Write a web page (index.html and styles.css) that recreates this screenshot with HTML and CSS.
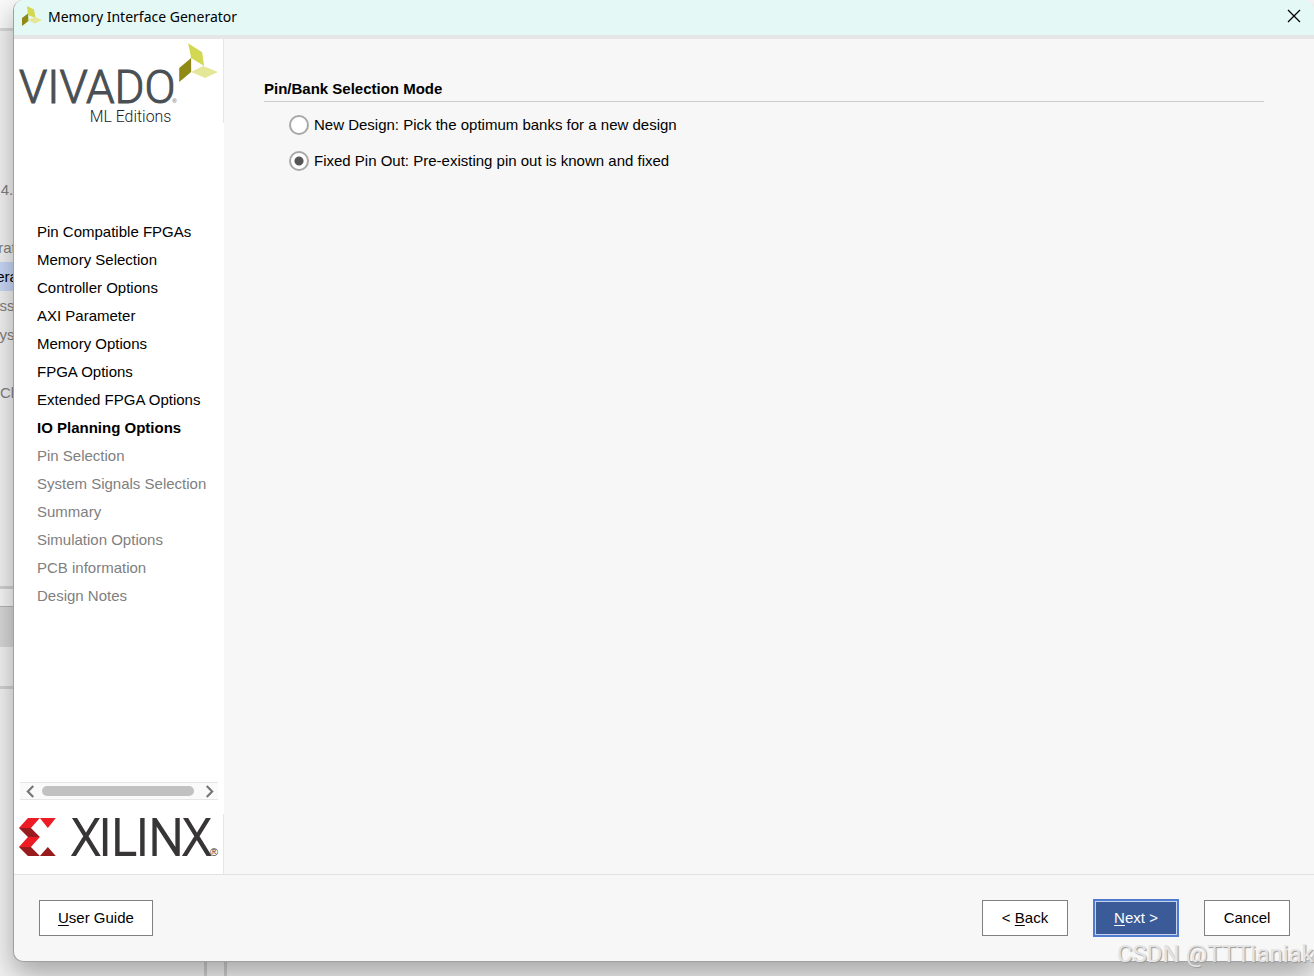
FILE: index.html
```html
<!DOCTYPE html>
<html lang="en">
<head>
  <meta charset="UTF-8" />
  <title>Memory Interface Generator</title>
  <link rel="stylesheet" href="styles.css">
</head>
<body>

  <div class="backdrop">
    <div class="back-top"></div>
    <ul class="back-tree">
      <li>4.</li>
      <li></li>
      <li>rat</li>
      <li class="selected">era</li>
      <li>ss</li>
      <li>ys</li>
      <li></li>
      <li>Cl</li>
    </ul>
    <div class="back-split"></div>
    <div class="back-tab"></div>
    <div class="back-row"></div>
    <div class="back-bottom"></div>
  </div>

  <main class="dialog">
    <header class="titlebar">
      <svg class="app-icon" viewBox="0 0 40 40" aria-hidden="true">
        <path d="M10 0 L24 7 L27 24 L12 18 Z" fill="#d3d852" />
        <path d="M0 24 L12 15 L13 30 L0 40 Z" fill="#8f8a15" />
        <path d="M11 28 L27 22 L40 28 L26 35 Z" fill="#e5e697" />
      </svg>
      <h1>Memory Interface Generator</h1>
      <button class="close" type="button" aria-label="Close">
        <svg viewBox="0 0 12 12" aria-hidden="true"><path d="M0 0 L12 12 M12 0 L0 12" /></svg>
      </button>
    </header>

    <div class="content">
      <aside class="sidebar">
        <svg class="vivado" viewBox="0 0 210 84" role="img" aria-label="Vivado ML Editions">
          <text class="vivado-name" x="5" y="64">VIVADO</text>
          <text class="vivado-reg" x="159" y="64">®</text>
          <text class="vivado-sub" x="76" y="83">ML Editions</text>
          <path d="M175 4 L189 13 L191 27 L178 19 Z" fill="#d3d852" />
          <path d="M166 29 L178 19 L178 33 L166 43 Z" fill="#8f8a15" />
          <path d="M178 33 L190 27 L205 33 L192 39 Z" fill="#e5e697" />
        </svg>

        <ol class="steps">
          <li>Pin Compatible FPGAs</li>
          <li>Memory Selection</li>
          <li>Controller Options</li>
          <li>AXI Parameter</li>
          <li>Memory Options</li>
          <li>FPGA Options</li>
          <li>Extended FPGA Options</li>
          <li class="current" aria-current="step">IO Planning Options</li>
          <li class="todo">Pin Selection</li>
          <li class="todo">System Signals Selection</li>
          <li class="todo">Summary</li>
          <li class="todo">Simulation Options</li>
          <li class="todo">PCB information</li>
          <li class="todo">Design Notes</li>
        </ol>

        <div class="scrollbar">
          <button type="button" aria-label="Scroll left">
            <svg viewBox="0 0 8 12" aria-hidden="true"><path d="M7 1 L2 6 L7 11" /></svg>
          </button>
          <div class="thumb"></div>
          <button type="button" aria-label="Scroll right">
            <svg viewBox="0 0 8 12" aria-hidden="true"><path d="M1 1 L6 6 L1 11" /></svg>
          </button>
        </div>

        <svg class="xilinx" viewBox="0 0 210 60" role="img" aria-label="Xilinx">
          <path d="M14 4 H26 L17 14 H5 Z M5 33 L14 23 H26 L17 33 Z M26 4 H42 L34 14 Z" fill="#ed1c24" />
          <path d="M5 14 H17 L26 23 H14 Z M5 33 H17 L26 42 H14 Z M26 42 L34 33 L42 42 Z" fill="#981b1e" />
          <text class="xilinx-name" x="59" y="41">XILINX</text>
          <text class="xilinx-reg" x="197" y="42">®</text>
        </svg>
      </aside>

      <form class="panel" id="pinMode">
        <fieldset>
          <legend>Pin/Bank Selection Mode</legend>
          <div class="option">
            <input type="radio" id="newDesign" name="mode" value="new">
            <label for="newDesign">New Design: Pick the optimum banks for a new design</label>
          </div>
          <div class="option">
            <input type="radio" id="fixedPinOut" name="mode" value="fixed" checked>
            <label for="fixedPinOut">Fixed Pin Out: Pre-existing pin out is known and fixed</label>
          </div>
        </fieldset>
      </form>
    </div>

    <footer class="actions">
      <button class="btn guide" type="button"><u>U</u>ser Guide</button>
      <button class="btn" type="button">&lt; <u>B</u>ack</button>
      <button class="btn next" type="submit" form="pinMode"><u>N</u>ext &gt;</button>
      <button class="btn" type="button">Cancel</button>
    </footer>
  </main>

  <div class="watermark">CSDN @TTTianiak</div>

</body>
</html>
```
FILE: styles.css
```css
* {
  box-sizing: border-box;
}
body {
  position: relative;
  margin: 0;
  min-height: 100vh;
  overflow: hidden;
  background: #ececec;
  color: #000;
  font-family: "Liberation Sans", Arial, sans-serif;
  font-size: 15px;
}
button {
  font: inherit;
  color: inherit;
  cursor: pointer;
}
ul, ol {
  list-style: none;
  margin: 0;
  padding: 0;
}

/* main window behind the dialog */
.backdrop {
  position: absolute;
  inset: 0;
  display: flex;
  flex-direction: column;
  background: #f2f2f2;
}
.back-top {
  height: 31px;
  border-bottom: 3px solid #d8d8d8;
  background: #fafafa;
}
.back-tree {
  padding-top: 144px;
  height: 555px;
  color: #808080;
}
.back-tree li {
  display: flex;
  justify-content: center;
  width: 14px;
  height: 29px;
  line-height: 29px;
}
.back-tree .selected {
  background: #c9d8f8;
  color: #000;
}
.back-split {
  height: 20px;
  border-top: 3px solid #d2d2d2;
  background: #f7f7f7;
}
.back-tab {
  height: 41px;
  border-top: 1px solid #b5b5b5;
  background: #d8d8d8;
}
.back-row {
  height: 42px;
  border-bottom: 3px solid #d2d2d2;
  background: #f2f2f2;
}
.back-bottom {
  flex: 1;
  width: 227px;
  border-right: 3px solid #d0d0d0;
  box-shadow: inset -17px 0 #f2f2f2, inset -20px 0 #d0d0d0;
}

/* dialog */
.dialog {
  position: relative;
  display: flex;
  flex-direction: column;
  min-height: calc(100vh - 14px);
  margin-left: 13px;
  margin-bottom: 14px;
  border: 1px solid #a0a0a0;
  border-top: none;
  border-right: none;
  border-radius: 10px;
  background: #f7f7f7;
  box-shadow: 0 12px 28px rgba(0, 0, 0, 0.32);
  overflow: hidden;
}
.titlebar {
  display: flex;
  align-items: center;
  gap: 6px;
  height: 39px;
  padding: 0 14px 3px 8px;
  border-bottom: 4px solid #e6e6e6;
  background: #e4f8f6;
}
.titlebar h1 {
  flex: 1;
  margin: 0;
  font-family: "Noto Sans", sans-serif;
  font-size: 14px;
  font-weight: normal;
}
.app-icon {
  width: 20px;
  height: 20px;
}
.close {
  padding: 0;
  border: none;
  background: none;
  line-height: 0;
}
.close svg {
  width: 12px;
  height: 12px;
  overflow: visible;
}
.close path {
  stroke: #000;
  stroke-width: 1.3;
}
.content {
  flex: 1;
  display: flex;
}

/* sidebar */
.sidebar {
  width: 210px;
  display: flex;
  flex-direction: column;
  background: #fff;
}
.vivado, .xilinx {
  display: block;
  width: 210px;
  border-right: 1px solid #e6e6e6;
}
.vivado {
  height: 84px;
}
.xilinx {
  height: 60px;
}
.vivado-name {
  fill: #4a4f53;
  stroke: #4a4f53;
  stroke-width: 1;
  font-family: Roboto, sans-serif;
  font-size: 46px;
  font-weight: 300;
}
.vivado-reg {
  fill: #4a4f53;
  font-size: 6px;
}
.vivado-sub {
  fill: #222;
  font-family: Roboto, sans-serif;
  font-size: 16px;
  font-weight: 300;
}
.xilinx text {
  fill: #373535;
}
.xilinx-name {
  stroke: #373535;
  stroke-width: 2;
  font-family: "Open Sans", sans-serif;
  font-size: 49px;
  font-weight: 300;
}
.xilinx-reg {
  font-size: 11px;
}
.steps {
  flex: 1;
  padding: 95px 0 0 23px;
}
.steps li {
  height: 28px;
  line-height: 28px;
  white-space: nowrap;
}
.steps .current {
  font-weight: bold;
}
.steps .todo {
  color: #808080;
}
.scrollbar {
  display: flex;
  align-items: center;
  gap: 7px;
  height: 18px;
  margin: 0 6px 14px;
  padding: 0 3px 0 5px;
  border-top: 1px solid #e6e6e6;
  border-bottom: 1px solid #e6e6e6;
  background: #fafafa;
}
.scrollbar button {
  padding: 0;
  border: none;
  background: none;
  line-height: 0;
}
.scrollbar svg {
  width: 10px;
  height: 13px;
}
.scrollbar path {
  fill: none;
  stroke: #767676;
  stroke-width: 2;
}
.thumb {
  width: 152px;
  height: 10px;
  margin-right: auto;
  border-radius: 5px;
  background: #c1c1c1;
}

/* options */
.panel {
  flex: 1;
  padding: 40px 50px 0 40px;
}
fieldset {
  margin: 0;
  padding: 0;
  border: none;
}
legend {
  width: 100%;
  margin-bottom: 5px;
  padding: 0 0 2px;
  border-bottom: 1px solid #cdcdcd;
  font-weight: bold;
  line-height: 20px;
}
.option {
  display: flex;
  align-items: center;
  gap: 5px;
  height: 36px;
  padding-left: 25px;
}
.option label {
  padding-bottom: 2px;
}
.option input {
  appearance: none;
  width: 20px;
  height: 20px;
  margin: 0;
  border: 2px solid #a8a8a8;
  border-radius: 50%;
  background: #fff;
}
.option input:checked {
  background: radial-gradient(circle, #555 4px, #fff 5px);
}

/* footer buttons */
.actions {
  display: flex;
  align-items: center;
  gap: 25px;
  height: 87px;
  padding: 0 24px 0 25px;
  border-top: 1px solid #e2e2e2;
}
.btn {
  min-width: 86px;
  height: 36px;
  padding: 0 18px 2px;
  border: 1px solid #808080;
  background: #fff;
}
.guide {
  margin-right: auto;
}
.next {
  min-width: 82px;
  height: 34px;
  margin: 0 2px;
  border-color: #c8d4ee;
  outline: 2px solid #4f7bd0;
  background: #3b5b98;
  color: #fff;
}
.btn u {
  text-underline-offset: 2px;
}

.watermark {
  position: absolute;
  left: calc(100% - 197px);
  bottom: 7px;
  color: #e4e4e4;
  font-family: Roboto, sans-serif;
  font-size: 24px;
  line-height: 30px;
  white-space: nowrap;
  text-shadow: 1px 1px 1px #999;
}
```
